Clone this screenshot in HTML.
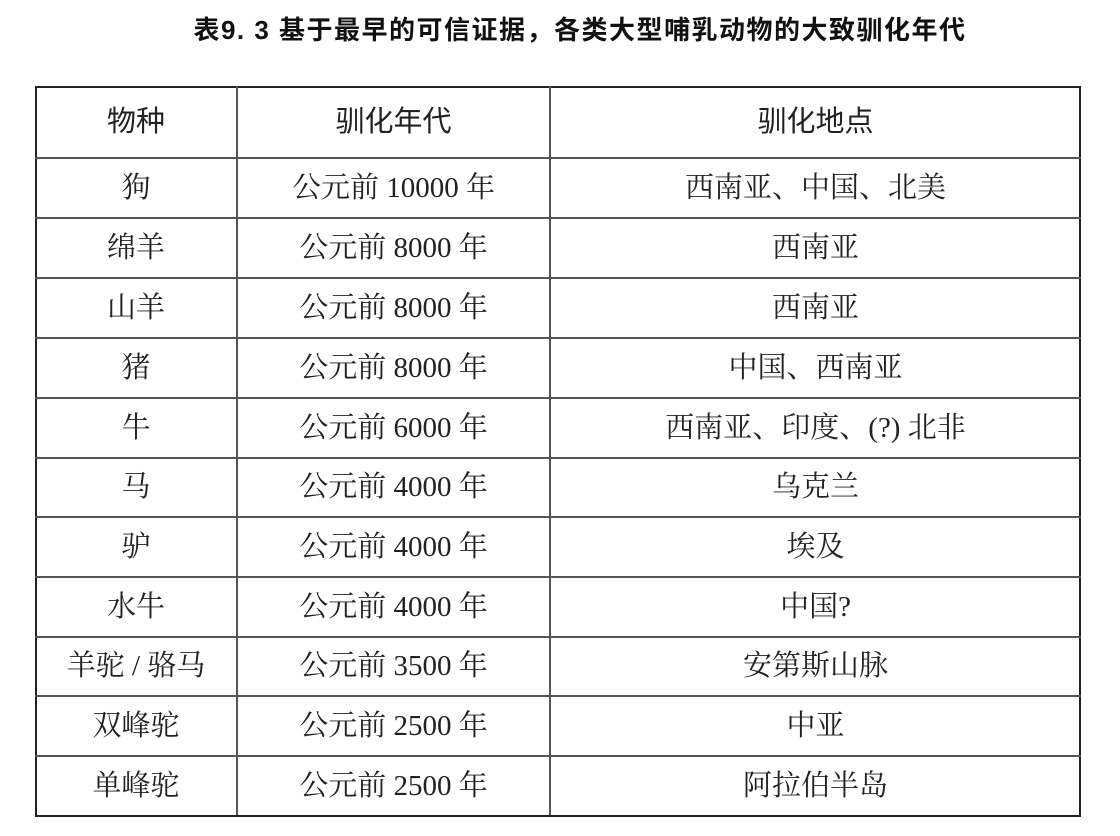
<!DOCTYPE html>
<html><head><meta charset="utf-8"><style>
body{margin:0;width:1120px;height:836px;background:#fff;position:relative;overflow:hidden}
.t{position:absolute;left:0;width:1160px;top:10px;text-align:center;font:bold 26px "Liberation Sans","Noto Sans CJK SC",sans-serif;color:#111;letter-spacing:1.5px}
.box{position:absolute;left:35px;top:86px;width:1042px;height:727px;border:2.5px solid #222}
.h{position:absolute;left:35px;width:1046px;height:2px;background:#555}
.v{position:absolute;top:86px;height:729px;width:2px;background:#555}
.c{position:absolute;text-align:center;font:29px "Liberation Serif","Noto Serif CJK SC",serif;color:#222;line-height:60px;height:60px}
.hd{font-family:"Liberation Sans","Noto Sans CJK SC",sans-serif;font-size:29px;line-height:72px;height:72px}
</style></head><body>
<div class="t">表9. 3 基于最早的可信证据，各类大型哺乳动物的大致驯化年代</div>
<div class="box"></div>
<div class="v" style="left:236px"></div>
<div class="v" style="left:549px"></div>
<div class="h" style="top:157px"></div>
<div class="h" style="top:217px"></div>
<div class="h" style="top:277px"></div>
<div class="h" style="top:337px"></div>
<div class="h" style="top:397px"></div>
<div class="h" style="top:457px"></div>
<div class="h" style="top:516px"></div>
<div class="h" style="top:576px"></div>
<div class="h" style="top:636px"></div>
<div class="h" style="top:695px"></div>
<div class="h" style="top:755px"></div>
<div class="c hd" style="left:36px;width:200px;top:86px">物种</div>
<div class="c hd" style="left:238px;width:311px;top:86px">驯化年代</div>
<div class="c hd" style="left:551px;width:529px;top:86px">驯化地点</div>
<div style="position:absolute;top:158px;left:0">
<div class="c" style="left:36px;width:200px;top:0">狗</div><div class="c" style="left:238px;width:311px;top:0">公元前 10000 年</div><div class="c" style="left:551px;width:529px;top:0">西南亚、中国、北美</div>
<div class="c" style="left:36px;width:200px;top:60px">绵羊</div><div class="c" style="left:238px;width:311px;top:60px">公元前 8000 年</div><div class="c" style="left:551px;width:529px;top:60px">西南亚</div>
<div class="c" style="left:36px;width:200px;top:120px">山羊</div><div class="c" style="left:238px;width:311px;top:120px">公元前 8000 年</div><div class="c" style="left:551px;width:529px;top:120px">西南亚</div>
<div class="c" style="left:36px;width:200px;top:180px">猪</div><div class="c" style="left:238px;width:311px;top:180px">公元前 8000 年</div><div class="c" style="left:551px;width:529px;top:180px">中国、西南亚</div>
<div class="c" style="left:36px;width:200px;top:240px">牛</div><div class="c" style="left:238px;width:311px;top:240px">公元前 6000 年</div><div class="c" style="left:551px;width:529px;top:240px">西南亚、印度、(?) 北非</div>
<div class="c" style="left:36px;width:200px;top:299px">马</div><div class="c" style="left:238px;width:311px;top:299px">公元前 4000 年</div><div class="c" style="left:551px;width:529px;top:299px">乌克兰</div>
<div class="c" style="left:36px;width:200px;top:359px">驴</div><div class="c" style="left:238px;width:311px;top:359px">公元前 4000 年</div><div class="c" style="left:551px;width:529px;top:359px">埃及</div>
<div class="c" style="left:36px;width:200px;top:419px">水牛</div><div class="c" style="left:238px;width:311px;top:419px">公元前 4000 年</div><div class="c" style="left:551px;width:529px;top:419px">中国?</div>
<div class="c" style="left:36px;width:200px;top:478px">羊驼 / 骆马</div><div class="c" style="left:238px;width:311px;top:478px">公元前 3500 年</div><div class="c" style="left:551px;width:529px;top:478px">安第斯山脉</div>
<div class="c" style="left:36px;width:200px;top:538px">双峰驼</div><div class="c" style="left:238px;width:311px;top:538px">公元前 2500 年</div><div class="c" style="left:551px;width:529px;top:538px">中亚</div>
<div class="c" style="left:36px;width:200px;top:598px">单峰驼</div><div class="c" style="left:238px;width:311px;top:598px">公元前 2500 年</div><div class="c" style="left:551px;width:529px;top:598px">阿拉伯半岛</div>
</div>
</body></html>
